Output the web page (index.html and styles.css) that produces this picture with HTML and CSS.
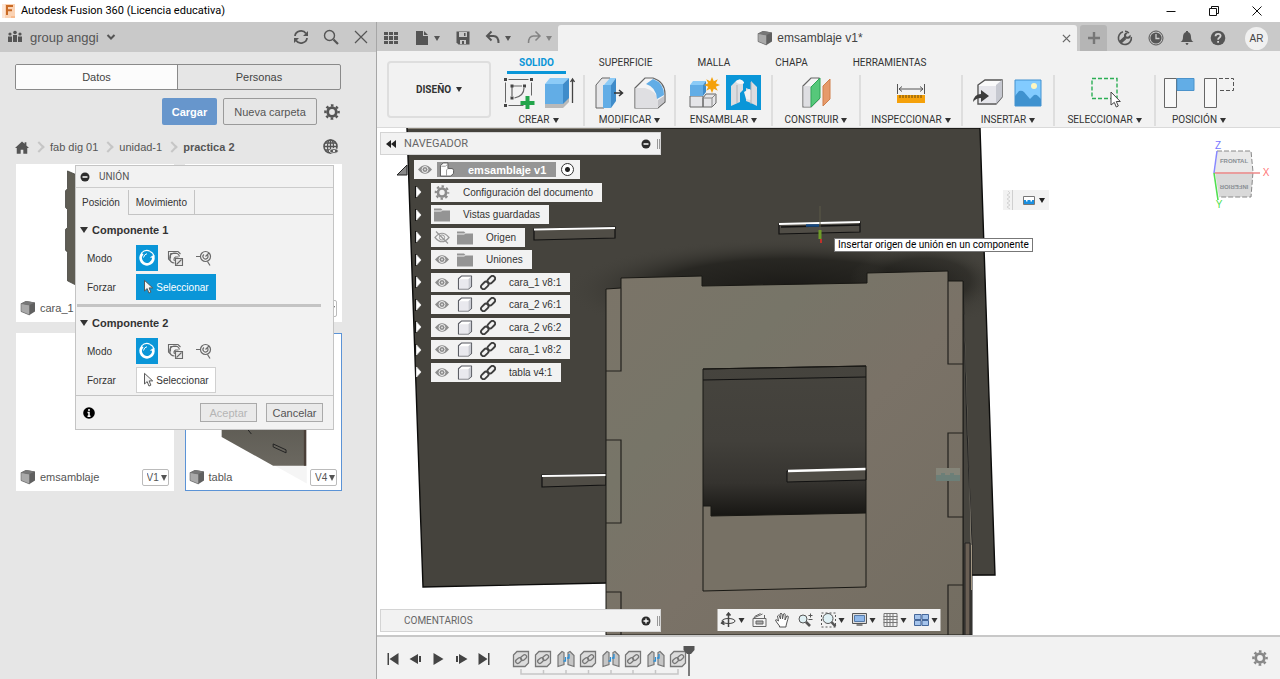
FILE: index.html
```html
<!DOCTYPE html>
<html lang="es">
<head>
<meta charset="utf-8">
<title>Autodesk Fusion 360 (Licencia educativa)</title>
<link rel="stylesheet" href="styles.css">
</head>
<body>
<svg class="defs" aria-hidden="true">
  <defs>
    <linearGradient id="gTabla" x1="0" y1="0" x2="0" y2="1"><stop offset="0" stop-color="#55534c"/><stop offset="1" stop-color="#6b6860"/></linearGradient>
  </defs>
  <symbol id="cube" viewBox="0 0 16 16"><path d="M1 3.500 6 1l9 1.500v9L9.500 15 1 11.500z" fill="#606060"/><path d="M1 3.500 9.500 5v10L1 11.500z" fill="#a9a9a9" stroke="#666" stroke-width=".6"/><path d="M1 3.500 6 1l9 1.500L9.500 5z" fill="#777"/></symbol>
  <symbol id="gear" viewBox="0 0 16 16"><circle cx="8" cy="8" r="4.300" fill="none" stroke="currentColor" stroke-width="2.800"/><circle cx="8" cy="8" r="6.600" fill="none" stroke="currentColor" stroke-width="2.400" stroke-dasharray="2.600 2.584" stroke-dashoffset="1.300"/></symbol>
  <symbol id="eye" viewBox="0 0 16 12"><path d="M1 6Q8-2.500 15 6 8 14.500 1 6z" fill="#8c8c8c"/><circle cx="8" cy="6" r="3" fill="#8c8c8c" stroke="#f2f2f2"/><circle cx="8" cy="6" r="1" fill="#ddd"/></symbol>
  <symbol id="eyeoff" viewBox="0 0 16 12"><path d="M1 6Q8-2.500 15 6 8 14.500 1 6z" fill="none" stroke="#999" stroke-width="1.200"/><circle cx="8" cy="6" r="2.600" fill="none" stroke="#999"/><path d="M2 0l12 12" stroke="#999" stroke-width="1.200"/></symbol>
  <symbol id="folder" viewBox="0 0 16 14"><path d="M0 1h7l2 2h7v11H0z" fill="#949494"/><path d="M0 3.500h7.500L9 2" fill="none" stroke="#f2f2f2"/></symbol>
  <symbol id="body" viewBox="0 0 16 16"><path d="M1 4 4.500 1H15v11l-3.500 3H1z" fill="#fff" stroke="#55575f" stroke-width="1.100" stroke-linejoin="round"/><path d="M11.500 4.500 14.500 1.500V12l-3 3z" fill="#c9cbd2"/><path d="M1.600 4.500h9.900v10H1.600z" fill="#e9e9ee"/></symbol>
  <symbol id="link" viewBox="0 0 16 16"><g fill="none" stroke="#3e3e3e" stroke-width="2"><rect x="7" y="2.300" width="9" height="5.400" rx="2.700" transform="rotate(-45 11.500 4.900)"/><rect x="0" y="8.500" width="9" height="5.400" rx="2.700" transform="rotate(-45 4.500 11.100)"/></g></symbol>
  <symbol id="minus" viewBox="0 0 10 10"><circle cx="5" cy="5" r="4.500" fill="#2c2c2c"/><path d="M2.500 5h5" stroke="#fff" stroke-width="1.500"/></symbol>
  <symbol id="plus" viewBox="0 0 10 10"><circle cx="5" cy="5" r="4.500" fill="#2c2c2c"/><path d="M2.500 5h5M5 2.500v5" stroke="#fff" stroke-width="1.300"/></symbol>
  <symbol id="joint" viewBox="0 0 22 26"><g fill="none" stroke="#fff"><path d="M6.500 8.500A6.300 6.300 0 1 0 16.800 10.500" stroke-width="2.800"/><path d="M5.500 8A7.400 7.400 0 0 1 14 6.200" stroke-width="1.100"/><path d="M14 6.500q3 1 4 4.500l-3.500 1.500" stroke-width="1.100"/><path d="M7.500 12.500q.5-3 3.500-3.800" stroke-width="1"/></g></symbol>
  <symbol id="between" viewBox="0 0 17 17"><g fill="none" stroke="#6a6a6a" stroke-width="1.100"><path d="M3 10.500 1.500 9V1.500H11L13.500 4M3.500 3.500h7M3.500 3.500v5"/><path d="M7.500 13A5 5 0 1 1 12.500 6.500M7.500 11a3 3 0 0 1 1-4l3 0"/><path d="M8.500 8.500h7v7h-7z" fill="#e6e6e6"/><path d="M9.500 14.500l5-5"/></g></symbol>
  <symbol id="axisj" viewBox="0 0 17 17"><g fill="none" stroke="#6a6a6a" stroke-width="1.200"><path d="M1 6.500h4M12.500 11.500l2.500 4"/><circle cx="10.500" cy="6.500" r="5"/><path d="M12.500 5A2.500 2.500 0 1 1 9 4.500M10.500 6.500 14 3"/></g></symbol>
  <symbol id="cursor" viewBox="0 0 12 18"><path d="M1.500 1.500v12l3-2.700 2 5 2.200-1-2-4.800h4z" fill="#f4f4f4" stroke="#555" stroke-width="1.100"/></symbol>
  <symbol id="tlink" viewBox="0 0 18 18"><path d="M1.500 5 5 1.500h11.500V13L13 16.500H1.500z" fill="#dcdcdc" stroke="#777" stroke-width="1.300"/><g fill="none" stroke="#777" stroke-width="1.300"><rect x="3" y="8.500" width="6.500" height="4" rx="2" transform="rotate(-40 6.500 10)"/><rect x="8" y="5.500" width="6.500" height="4" rx="2" transform="rotate(-40 11.500 7)"/></g></symbol>
  <symbol id="tjoint" viewBox="0 0 18 18"><path d="M1 5.500 5 1.500l2 1v12L1 16.500zM17 5.500l-4-4-2 1v12l6 2z" fill="#c6c6c6" stroke="#777" stroke-width="1.200"/><path d="M6.500 11h2V7M12 4v4h-2" fill="none" stroke="#2b8fd6" stroke-width="1.300"/></symbol>
  <symbol id="arr" viewBox="0 0 8 12"><path d="M1.500 0v12" stroke="#111"/><path d="M2.500 1 7 6 2.500 11z" fill="#fff" stroke="#ddd"/></symbol>
</svg>

<header class="titlebar">
  <svg class="logo" viewBox="0 0 16 16"><path d="M1 1h13v14H1z" fill="#fbd3b4"/><path d="M1 1h3v14H1z" fill="#fde6d6"/><path d="M6 12V3h6M6 7.200h5" fill="none" stroke="#c96a25" stroke-width="2"/><path d="M10 14h4" stroke="#f5a468"/></svg>
  <h1>Autodesk Fusion 360 (Licencia educativa)</h1>
  <div class="winbtns">
    <button aria-label="Minimizar"><svg viewBox="0 0 12 12"><path d="M1.500 6.500h9"/></svg></button>
    <button aria-label="Restaurar"><svg viewBox="0 0 12 12"><path d="M1.500 3.500h7v7h-7zM3.500 3V1.500h7v7H9"/></svg></button>
    <button aria-label="Cerrar"><svg viewBox="0 0 12 12"><path d="M1.500 1.500l9 9M10.500 1.500l-9 9"/></svg></button>
  </div>
</header>

<div class="workspace">
<aside class="data">
  <div class="data-head">
    <button class="team"><svg class="i16" viewBox="0 0 16 16" fill="#555"><circle cx="3" cy="5" r="1.600"/><circle cx="8" cy="3.500" r="1.800"/><circle cx="13" cy="5" r="1.600"/><path d="M1 7.500h4V13H1zM6 6h4v7H6zM11 7.500h4V13h-4z"/></svg><span>group anggi</span><svg class="chev" viewBox="0 0 10 8"><path d="M1.500 2 5 5.500 8.500 2" fill="none" stroke="#555" stroke-width="2"/></svg></button>
    <div class="head-tools">
      <button aria-label="Actualizar"><svg class="i16" viewBox="0 0 16 16" fill="none" stroke="#555" stroke-width="1.800"><path d="M2 7A6 5.500 0 0 1 13 4.500M14 9A6 5.500 0 0 1 3 11.500"/><path d="M15 2v5h-5zM1 14V9h5z" fill="#555" stroke="none"/></svg></button>
      <button aria-label="Buscar"><svg class="i16" viewBox="0 0 16 16" fill="none" stroke="#555"><circle cx="6.500" cy="6.500" r="5" stroke-width="1.400"/><path d="M10.500 10.500l4.500 4.500" stroke-width="2.200"/></svg></button>
      <button aria-label="Cerrar panel"><svg class="i16" viewBox="0 0 16 16" stroke="#555" stroke-width="1.200"><path d="M2 2l12 12M14 2 2 14"/></svg></button>
    </div>
  </div>
  <div class="seg"><button class="on">Datos</button><button>Personas</button></div>
  <div class="actions">
    <button class="upload">Cargar</button><button class="newf">Nueva carpeta</button>
    <button class="plain" aria-label="Configuración"><svg class="i16 dark"><use href="#gear"/></svg></button>
  </div>
  <nav class="crumbs">
    <a href="#" aria-label="Inicio"><svg class="home" viewBox="0 0 16 14"><path d="M0 7.500 8 0l3 2.800V1h2v3.700l3 2.800h-2V14H9.500V9.500h-3V14H2V7.500z" fill="#555"/></svg></a>
    <i class="sep"></i><a href="#">fab dig 01</a><i class="sep"></i><a href="#">unidad-1</a><i class="sep"></i><a href="#" class="here">practica 2</a>
    <button class="plain globe" aria-label="Compartir"><svg class="i16" viewBox="0 0 16 16" fill="none" stroke="#555"><circle cx="7.500" cy="7.500" r="6.500" stroke-width="1.600"/><ellipse cx="7.500" cy="7.500" rx="3" ry="6.500" stroke-width="1.300"/><path d="M1 7.500h13M2 4h11M2 11h11M7.500 1v13" stroke-width="1.300"/><path d="M6 12q5-5 10 0-5 5-10 0z" fill="#555" stroke="#e6e6e6"/><circle cx="11" cy="12" r="1.200" fill="#e6e6e6" stroke="none"/></svg></button>
  </nav>
  <div class="cards">
    <article class="card"><svg class="thumb" viewBox="0 0 157 125"><path d="M51 6l14 6v112l-14-7V88l-2-2V65l2-2V45l-2-2V26l2-2z" fill="#5f5d54" stroke="#33322d" stroke-width=".7"/></svg>
      <footer><svg class="i16"><use href="#cube"/></svg><span>cara_1</span></footer></article>
    <article class="card"><div class="thumb"></div>
      <footer><label class="ver"><select aria-label="Versión de cara_2"><option></option></select></label></footer></article>
    <article class="card"><div class="thumb"></div>
      <footer><svg class="i16"><use href="#cube"/></svg><span>emsamblaje</span><label class="ver"><select aria-label="Versión de emsamblaje"><option>V1</option></select></label></footer></article>
    <article class="card sel"><svg class="thumb" viewBox="0 0 157 157"><path d="M88 132h34v19z" fill="#f5f5f5"/><path d="M36 60h85v73H88L36 104z" fill="url(#gTabla)"/><path d="M119 60h2.500v73H119z" fill="#4a3f38"/><path d="M88 111l13 6v3l-13-6zM62 96l4 5" fill="none" stroke="#222"/></svg>
      <footer><svg class="i16"><use href="#cube"/></svg><span>tabla</span><label class="ver"><select aria-label="Versión de tabla"><option>V4</option></select></label></footer></article>
  </div>
</aside>

<main class="main">
  <div class="tabbar">
    <div class="quick">
      <button aria-label="Panel de datos"><svg class="i16" viewBox="0 0 16 16" fill="#555"><path d="M1 2h4v3H1zM6 2h4v3H6zM11 2h4v3h-4zM1 6h4v4H1zM6 6h4v4H6zM11 6h4v4h-4zM1 11h4v3H1zM6 11h4v3H6zM11 11h4v3h-4z"/></svg></button>
      <button aria-label="Archivo"><svg class="i16" viewBox="0 0 16 16" fill="#555"><path d="M2 1h7v5h5v9H2zM10 1l4 4h-4z"/></svg><i class="caret"></i></button>
      <button aria-label="Guardar"><svg class="i16" viewBox="0 0 16 16"><path d="M1.500 1.500h13v13h-11l-2-2z" fill="#555"/><path d="M4 2v5h8V2zM5 10v4h6v-4z" fill="#c9c9c9"/><path d="M9 3h1.500v3H9zM7 11h2v3H7z" fill="#555"/></svg></button>
      <button aria-label="Deshacer"><svg class="i16" viewBox="0 0 16 16"><path d="M2.500 6h6q5 0 5 7M6.500 1.500 2 6l4.500 4.500" fill="none" stroke="#555" stroke-width="2"/></svg><i class="caret"></i></button>
      <button aria-label="Rehacer" class="dim"><svg class="i16" viewBox="0 0 16 16"><path d="M13.500 6h-6q-5 0-5 7M9.500 1.500 14 6l-4.500 4.500" fill="none" stroke="#555" stroke-width="1.500"/></svg><i class="caret"></i></button>
    </div>
    <div class="doctab"><span class="docname"><svg class="i16"><use href="#cube"/></svg>emsamblaje v1*</span><button aria-label="Cerrar documento"><svg viewBox="0 0 10 10"><path d="M1 1l8 8M9 1 1 9" stroke="#666" stroke-width="1.400"/></svg></button></div>
    <button class="add" aria-label="Nuevo"><svg viewBox="0 0 12 12"><path d="M6 0v12M0 6h12" stroke="#777" stroke-width="2.400"/></svg></button>
    <div class="status">
      <button aria-label="Extensiones"><svg class="i16" viewBox="0 0 16 16"><path d="M6 1.800A6.500 6.500 0 1 0 14.300 7" fill="none" stroke="#555" stroke-width="1.600"/><path d="M8 1.300A6.500 6.500 0 0 1 12 3" fill="none" stroke="#555" stroke-width="1.400"/><path d="M3 12.500 8 8" stroke="#555" stroke-width="3.400"/><path d="M7 4.500v4.300h4.500q3-1 2-4L11 6.800 9.300 6.500 9 5l2-2.300Q8 2 7 4.500z" fill="#555"/></svg></button>
      <button aria-label="Historial"><svg class="i16" viewBox="0 0 16 16"><circle cx="8" cy="8" r="7" fill="none" stroke="#555"/><circle cx="8" cy="8" r="5.600" fill="#555"/><path d="M8 4v4.500h3.500" fill="none" stroke="#ccc" stroke-width="1.300"/></svg></button>
      <button aria-label="Avisos"><svg class="i16" viewBox="0 0 16 16" fill="#555"><path d="M7 1h2v1q3 1 3 5 0 4 2.500 5h-13Q4 11 4 7q0-4 3-5zM6.500 13h3q-.500 2-1.500 2t-1.500-2z"/></svg></button>
      <button aria-label="Ayuda"><svg class="i16" viewBox="0 0 16 16"><circle cx="8" cy="8" r="7.300" fill="#555"/><path d="M5.500 6.300q0-2.500 2.600-2.500 2.500 0 2.500 2 0 1-1.300 1.900-1.200.8-1.200 2M8.100 11v1.800" fill="none" stroke="#d4d4d4" stroke-width="1.800"/></svg></button>
      <button class="avatar">AR</button>
    </div>
  </div>

  <div class="ribbon">
    <button class="mode">DISEÑO <i class="caret"></i></button>
    <div class="tools">
      <nav class="tabs"><a href="#" class="on">SOLIDO</a><a href="#">SUPERFICIE</a><a href="#">MALLA</a><a href="#">CHAPA</a><a href="#">HERRAMIENTAS</a></nav>
      <div class="groups">
        <section><div class="icons">
          <button aria-label="Crear boceto"><svg viewBox="0 0 32 32"><path d="M5.500 2.500h20M2.500 5.500v20M28.500 5.500v13M5.500 28.500h15" fill="none" stroke="#666"/><path d="M9 19V9h10M21 11q0 8-9.500 10" fill="none" stroke="#666" stroke-width="1.200"/><path d="M1 1h3v3H1zM27 1h3v3h-3zM1 27h3v3H1zM7.500 7.500h3v3h-3zM20 7.500h3v3h-3zM7.500 19.500h3v3h-3z" fill="#444"/><path d="M22.500 19h4v5h5v4h-5v4h-4v-4h-5v-4h5z" fill="#23a54b"/></svg></button>
          <button aria-label="Extruir"><svg viewBox="0 0 32 32"><path d="M2 25h18l6-5v5l-6 6H2z" fill="#b9b9b9"/><path d="M2 7 7 1h19l-6 6z" fill="#8ccbf7"/><path d="M2 7h18v20H2z" fill="#62ade6"/><path d="M20 7l6-6v20l-6 6z" fill="#3f8cca"/><path d="M29.500 26V3M27.500 5l2-3 2 3" fill="none" stroke="#444" stroke-width="1.300"/></svg></button></div>
          <button class="gl">CREAR<i class="caret"></i></button></section>
        <section><div class="icons">
          <button aria-label="Pulsar/tirar"><svg viewBox="0 0 32 32"><path d="M2 8l6-7h8v23l-6 7H2z" fill="#e6e6e8" stroke="#666"/><path d="M10 8l6-7h6l-5 7z" fill="#8ccbf7"/><path d="M9 8h8v23H9z" fill="#62ade6"/><path d="M17 8l5-7v23l-5 7z" fill="#3f8cca"/><path d="M20 16h8M25 13l3.500 3-3.500 3" fill="none" stroke="#333" stroke-width="1.500"/></svg></button>
          <button aria-label="Empalme"><svg viewBox="0 0 32 32"><path d="M1 11 11 1h8q12 4 12 16v8l-7 6H1z" fill="#f4f4f5" stroke="#666" stroke-width="1.200"/><path d="M1.500 11H11q12 3 13 13v7H1.500z" fill="#dfdfe2"/><path d="M12 7l7-5q11 4 11 16l-7 4Q22 10 12 7z" fill="#62ade6"/><path d="M24 23l6-4v6l-6 5z" fill="#c4c4c8"/></svg></button></div>
          <button class="gl">MODIFICAR<i class="caret"></i></button></section>
        <section><div class="icons">
          <button aria-label="Nuevo componente"><svg viewBox="0 0 32 32"><path d="M2 19h13v11H2zM15 21l3-4h10v9l-4 4h-9z" fill="#e5e5e8" stroke="#666"/><path d="M15 21h9v9M24 21l4-4" fill="none" stroke="#888"/><path d="M2 8l3-4h13l-3 4z" fill="#8ccbf7"/><path d="M2 8h13v11H2z" fill="#62ade6"/><path d="M15 8l3-4v11l-3 4z" fill="#3f8cca"/><path d="M24 0l1.800 4.200 4-2-2 4.100L32 8l-4.200 1.700 2 4.100-4-2L24 16l-1.800-4.200-4 2 2-4.100L16 8l4.200-1.700-2-4.100 4 2z" fill="#f5a10a"/></svg></button>
          <button class="active" aria-label="Unión"><svg viewBox="0 0 32 32"><path d="M3 9l5-5q4-3 7 0v9l-3 3v9l-9 4z" fill="#dcdcdf"/><path d="M8 4q4-3 7 0t-2 3-5-3z" fill="#f6f6f7"/><path d="M9 8v18" stroke="#b0b0b5" fill="none"/><path d="M29 10l-6-6v9l-5-2v13l5 2 6 3z" fill="#dcdcdf"/><path d="M16 15l5-3 2 1v10l-5-1z" fill="#f2f2f4"/><path d="M23 5v22" stroke="#b0b0b5" fill="none"/></svg></button></div>
          <button class="gl">ENSAMBLAR<i class="caret"></i></button></section>
        <section><div class="icons">
          <button aria-label="Plano de desfase"><svg viewBox="0 0 32 32"><path d="M3 9l8-8h8v21l-8 8H3z" fill="#f4f4f4" stroke="#666" stroke-width="1.200"/><path d="M3.500 9H11v20.500H3.500z" fill="#dedee2"/><path d="M11 10l9-9v20l-9 9z" fill="#56c87a" stroke="#2fa557"/><path d="M23 9l7-7v20l-7 7z" fill="#e69a6a" stroke="#cf7f4b"/></svg></button></div>
          <button class="gl">CONSTRUIR<i class="caret"></i></button></section>
        <section><div class="icons">
          <button aria-label="Medir"><svg viewBox="0 0 32 32"><path d="M2.500 7v10M29.500 7v10M4 12h24M7 9.500 4 12l3 2.500M25 9.500l3 2.500-3 2.500" fill="none" stroke="#555"/><path d="M2 18h28v8H2z" fill="#f5a10a"/><path d="M5 18v3M8 18v3M11 18v3M14 18v3M17 18v3M20 18v3M23 18v3M26 18v3" stroke="#6b4a0a"/></svg></button></div>
          <button class="gl">INSPECCIONAR<i class="caret"></i></button></section>
        <section><div class="icons">
          <button aria-label="Insertar derivado"><svg viewBox="0 0 32 32"><path d="M6 8l7-5h17v17l-6 7H6z" fill="#fafafa" stroke="#555" stroke-width="1.400"/><path d="M24 8l6-5v17l-6 7z" fill="#c6c8d0"/><path d="M7 9h17v17H7z" fill="#e6e6eb"/><path d="M1 25q1-8 8-8v-4l8 6-8 6v-4q-5 0-8 4z" fill="#3c3c3c"/></svg></button>
          <button aria-label="Lienzo"><svg viewBox="0 0 32 32"><path d="M3 3h26v26H3z" fill="#82cbff"/><path d="M3 19l4-5q3-1 5 1l6 7 4-4q2-1 4 1l3 3v7H3z" fill="#3f92cf"/><circle cx="22" cy="9" r="3" fill="#fdf6c0"/><path d="M3 3h26v26H3z" fill="none" stroke="#4292d0"/></svg></button></div>
          <button class="gl">INSERTAR<i class="caret"></i></button></section>
        <section><div class="icons">
          <button aria-label="Seleccionar"><svg viewBox="0 0 32 32"><path d="M3 1.500h25v20H3z" fill="none" stroke="#2cae55" stroke-width="1.400" stroke-dasharray="4 2"/><path d="M22 15v13l3.300-2.600 2 4.600 2-1-2-4.500h4z" fill="#fff" stroke="#444"/></svg></button></div>
          <button class="gl">SELECCIONAR<i class="caret"></i></button></section>
        <section><div class="icons">
          <button aria-label="Capturar posición"><svg viewBox="0 0 32 32"><path d="M1.500 1.500h12v29h-12z" fill="#f8f8f8" stroke="#666"/><path d="M14 1.500h17v12H14z" fill="#62ade6" stroke="#4b93cb"/></svg></button>
          <button aria-label="Revertir posición"><svg viewBox="0 0 32 32"><path d="M1.500 1.500h12v29h-12z" fill="#f8f8f8" stroke="#666"/><path d="M16 1.500h14.500v12H15" fill="none" stroke="#555" stroke-dasharray="4 2"/></svg></button></div>
          <button class="gl">POSICIÓN<i class="caret"></i></button></section>
      </div>
    </div>
  </div>

  <div class="canvas">
    <svg class="scene" viewBox="377 128 903 507" preserveAspectRatio="xMinYMin meet">
      <defs>
        <radialGradient id="dk"><stop offset="0" stop-color="#1a1916"/><stop offset=".6" stop-color="#23221e" stop-opacity=".85"/><stop offset="1" stop-color="#45433d" stop-opacity="0"/></radialGradient>
        <linearGradient id="hole" x1="0" y1="0" x2="0" y2="1"><stop offset="0" stop-color="#46443e"/><stop offset=".5" stop-color="#42403b"/><stop offset=".78" stop-color="#35332f"/><stop offset="1" stop-color="#171613"/></linearGradient>
        <linearGradient id="face" x1="0" y1="0" x2="1" y2="1"><stop offset="0" stop-color="#7b7468"/><stop offset=".3" stop-color="#777568"/><stop offset=".55" stop-color="#7a7267"/><stop offset="1" stop-color="#736d61"/></linearGradient>
        <clipPath id="tc"><path d="M407 128H980L995 575 423 587z"/></clipPath>
      </defs>
      <path d="M407 128H980L995 575 423 587z" fill="#45433d"/>
      <g clip-path="url(#tc)"><ellipse cx="790" cy="290" rx="225" ry="52" fill="url(#dk)"/><ellipse cx="925" cy="280" rx="75" ry="36" fill="url(#dk)" opacity=".6"/></g>
      <path d="M407 128.500H620" stroke="#8a857a"/><path d="M620 128.500H980" stroke="#1d1c19"/>
      <path d="M407 128 423 587 606 583M980 128 995 575 971 575" fill="none" stroke="#0c0c0b" stroke-width="1.400"/>
      <g stroke="#111" stroke-width="1.200"><path d="M534 229l81-2v11l-81 2z" fill="#504d46"/><path d="M779 224l81-2v10l-81 2z" fill="#504d46"/><path d="M542 475l64-1v11l-64 2z" fill="#504d46"/></g>
      <path d="M534 229.500l81-1.500M779 224l81-2M542 476l64-1" stroke="#fff" stroke-width="2"/>
      <path d="M781 227l79-2" stroke="#111" stroke-width="1.500"/>
      <path d="M963 281 967 430 972 545V635H963z" fill="#46443e" stroke="#222"/>
      <path d="M963.500 300 965 340 971.500 545V575L969 470z" fill="#a9a190"/><path d="M965 543h5v92h-5z" fill="#6a5f54" stroke="#222"/><path d="M971.500 545v45" stroke="#a39783"/>
      <path d="M606 635V289l15-1V278l81-2v10l165-3V273l81-2v10h15V635z" fill="url(#face)" stroke="#191814"/>
      <path d="M606 371h15V288M606 440h15v83h-15M606 592h15v43M963 364h-15V281M963 433h-15v84h15M963 585h-15v50" fill="none" stroke="#22211d" stroke-width="1.200"/>
      <path d="M703 369l163-3v221l-163 4z" fill="#777165"/>
      <path d="M703 369l163-3v147l-155 3v-10h-8z" fill="url(#hole)"/>
      <path d="M703 369l163-3M703 380l163-3" stroke="#111"/>
      <path d="M787 471l79-2v11l-79 2z" fill="#504d46" stroke="#111"/><path d="M788 471l78-2" stroke="#fff" stroke-width="2.400"/>
      <path d="M703 506h8v10l155-3M703 369l163-3v221l-163 4z" fill="none" stroke="#191814"/>
      <path d="M806 225.500h13" stroke="#174a83" stroke-width="2.500"/><path d="M820 206v24" stroke="#5c5a48"/><path d="M820 230v9" stroke="#6f9c27" stroke-width="3"/><path d="M821 239v4" stroke="#c0302a" stroke-width="2"/>
      <path d="M936 468h24v13h-24z" fill="#858579"/><path d="M936 475h5v-2h4v2h5v-2h4v2h6v6h-24z" fill="#6c7f78"/>
    </svg>

    <div class="bar nav"><svg class="rew" viewBox="0 0 10 8"><path d="M5 0v8L0 4zM10 0v8L5 4z" fill="#222"/></svg><h2>NAVEGADOR</h2><button aria-label="Contraer"><svg><use href="#minus"/></svg></button><i class="grip"></i></div>
    <ul class="tree">
      <li class="root"><svg class="rootarr" viewBox="0 0 12 12"><path d="M1 11 11 1v10z" fill="#888" stroke="#222"/></svg><div class="row"><svg class="ti"><use href="#eye"/></svg><span class="act"><svg class="ti" viewBox="0 0 16 16"><path d="M1 4l3-3h5v6h5l1 2v3l-3 3H1z" fill="#fff" stroke="#555"/><path d="M7.500 15V8.500L9 7M2 4.500h4.500L9 2" fill="none" stroke="#999"/></svg><b>emsamblaje v1</b></span><input type="radio" checked aria-label="Activar emsamblaje v1"></div></li>
      <li><svg class="arr"><use href="#arr"/></svg><div class="row"><svg class="ti gray"><use href="#gear"/></svg><span>Configuración del documento</span></div></li>
      <li><svg class="arr"><use href="#arr"/></svg><div class="row"><svg class="ti"><use href="#folder"/></svg><span>Vistas guardadas</span></div></li>
      <li><svg class="arr"><use href="#arr"/></svg><div class="row"><svg class="ti"><use href="#eyeoff"/></svg><svg class="ti"><use href="#folder"/></svg><span>Origen</span></div></li>
      <li><svg class="arr"><use href="#arr"/></svg><div class="row"><svg class="ti"><use href="#eye"/></svg><svg class="ti"><use href="#folder"/></svg><span>Uniones</span></div></li>
      <li><svg class="arr"><use href="#arr"/></svg><div class="row"><svg class="ti"><use href="#eye"/></svg><svg class="ti"><use href="#body"/></svg><svg class="ti"><use href="#link"/></svg><span>cara_1 v8:1</span></div></li>
      <li><svg class="arr"><use href="#arr"/></svg><div class="row"><svg class="ti"><use href="#eye"/></svg><svg class="ti"><use href="#body"/></svg><svg class="ti"><use href="#link"/></svg><span>cara_2 v6:1</span></div></li>
      <li><svg class="arr"><use href="#arr"/></svg><div class="row"><svg class="ti"><use href="#eye"/></svg><svg class="ti"><use href="#body"/></svg><svg class="ti"><use href="#link"/></svg><span>cara_2 v6:2</span></div></li>
      <li><svg class="arr"><use href="#arr"/></svg><div class="row"><svg class="ti"><use href="#eye"/></svg><svg class="ti"><use href="#body"/></svg><svg class="ti"><use href="#link"/></svg><span>cara_1 v8:2</span></div></li>
      <li><svg class="arr"><use href="#arr"/></svg><div class="row"><svg class="ti"><use href="#eye"/></svg><svg class="ti"><use href="#body"/></svg><svg class="ti"><use href="#link"/></svg><span>tabla v4:1</span></div></li>
    </ul>

    <div class="tip" role="tooltip">Insertar origen de unión en un componente</div>
    <div class="mini"><svg class="zig" viewBox="0 0 10 20"><path d="M5 1l2 2-3 2 3 2-3 2 3 2-3 2 3 2-3 2 3 2" fill="none" stroke="#d4d4d4"/><path d="M9.500 0v20" stroke="#d0d0d0"/></svg><button aria-label="Filtro de unión"><svg class="wave" viewBox="0 0 12 9"><path d="M.5.5h11v8H.5z" fill="#fff" stroke="#777"/><path d="M1 4h2v1.500h1.500V4h3v1.500H9V4h2v4H1z" fill="#1a8fe0"/></svg><i class="caret"></i></button></div>
    <svg class="vcube" viewBox="1208 138 66 72"><path d="M1217 151h34l2 21h-38z" fill="#e9e9e9"/><path d="M1215 172h38l-2 25h-32z" fill="#d9d9d9"/><path d="M1217 151h34l2 21-2 25h-32" fill="none" stroke="#888" stroke-dasharray="5 2"/><path d="M1214 173h46" stroke="#e88" stroke-width="1.300"/><path d="M1214 173l3-22" stroke="#88f" stroke-width="1.500"/><path d="M1214 173l4 27" stroke="#4fe04f" stroke-width="1.600"/><text x="1234" y="163" class="ct">FRONTAL</text><text x="1234" y="163" class="ct" transform="rotate(180 1234 174)">INFERIOR</text><text x="1218" y="149" class="ax z">Z</text><text x="1266" y="176" class="ax x">X</text><text x="1219" y="208" class="ax y">Y</text></svg>

    <div class="bar com"><h2>COMENTARIOS</h2><button aria-label="Expandir"><svg><use href="#plus"/></svg></button><i class="grip"></i></div>
    <div class="viewbar">
      <button aria-label="Órbita"><svg viewBox="0 0 16 16" fill="none" stroke="#444"><ellipse cx="8" cy="9" rx="6.500" ry="2.500"/><path d="M8 15V1M6 3.500 8 1l2 2.500M3.500 9l-2.500 2 3 1.500" stroke-width="1.500"/></svg><i class="caret"></i></button>
      <button aria-label="Mirar a"><svg viewBox="0 0 16 16" fill="none" stroke="#666"><path d="M1.500 6.500h13v8h-13zM2 6l9-4M3 4.500 9 1.500M13 6V3"/><path d="M4.500 9h7v3h-7z" fill="#aaa"/></svg></button>
      <button aria-label="Encuadre"><svg viewBox="0 0 16 16"><path d="M5 14Q1 9 1 8q1-1 3 1L3 4q1-1.500 2 0l1 3-.5-5q1-1.500 2 0L8 7l1-5q1.500-1 1.700.5L10.500 8l1.800-4q1.500-.5 1.500 1-.3 2-1.300 5l-1 4v1H5z" fill="#fff" stroke="#555"/></svg></button>
      <button aria-label="Zoom"><svg viewBox="0 0 16 16" fill="none" stroke="#555"><circle cx="5.500" cy="7" r="4" fill="#dff0f4"/><path d="M8.500 10l4 4" stroke-width="2.600"/><path d="M11 3.500h4M13 1.500v4M11 7.500h4"/></svg></button>
      <button aria-label="Ajustar"><svg viewBox="0 0 16 16" fill="none" stroke="#555"><path d="M1 1h14v14H1z" stroke-dasharray="2 2"/><circle cx="7.500" cy="6.500" r="5" fill="#dff0f4"/><path d="M11 10l4 4.500" stroke-width="2.600"/></svg><i class="caret"></i></button>
      <button aria-label="Visualización"><svg viewBox="0 0 16 16"><path d="M1 1.500h14v10H1z" fill="#ddd" stroke="#555"/><path d="M3 3.500h10v6H3z" fill="#8fb8ea" stroke="#557aa8"/><path d="M5 14h6v-2H5z" fill="#888"/></svg><i class="caret"></i></button>
      <button aria-label="Rejilla"><svg viewBox="0 0 16 16"><path d="M1.500 1.500h13v13h-13zM4.500 1v14M7.500 1v14M10.500 1v14M1 4.500h14M1 7.500h14M1 10.500h14" fill="none" stroke="#777"/></svg><i class="caret"></i></button>
      <button aria-label="Ventanas"><svg viewBox="0 0 16 16"><path d="M1 2.500h6.500v5H1zM8.500 2.500H15v5H8.500zM1 8.500h6.500v5H1zM8.500 8.500H15v5H8.500z" fill="#a5c4ec" stroke="#45679a"/></svg><i class="caret"></i></button>
    </div>
  </div>

  <footer class="timeline">
    <div class="play">
      <button aria-label="Inicio"><svg viewBox="0 0 12 14"><path d="M1 1h1.500v12H1zM12 1v12L3 7z"/></svg></button>
      <button aria-label="Anterior"><svg viewBox="0 0 12 14"><path d="M8.500 2v10L0 7zM9.500 4h2v6h-2z"/></svg></button>
      <button aria-label="Reproducir"><svg viewBox="0 0 12 14"><path d="M1 1v12l10-6z"/></svg></button>
      <button aria-label="Siguiente"><svg viewBox="0 0 12 14"><path d="M3.500 2v10L12 7zM.5 4h2v6h-2z"/></svg></button>
      <button aria-label="Final"><svg viewBox="0 0 12 14"><path d="M9.500 1H11v12H9.500zM0 1v12l9-6z"/></svg></button>
    </div>
    <div class="track">
      <div class="feats">
        <button aria-label="cara_1"><svg><use href="#tlink"/></svg></button><button aria-label="cara_2"><svg><use href="#tlink"/></svg></button><button aria-label="Unión 1"><svg><use href="#tjoint"/></svg></button><button aria-label="cara_2 copia"><svg><use href="#tlink"/></svg></button><button aria-label="Unión 2"><svg><use href="#tjoint"/></svg></button><button aria-label="cara_1 copia"><svg><use href="#tlink"/></svg></button><button aria-label="Unión 3"><svg><use href="#tjoint"/></svg></button><button aria-label="tabla"><svg><use href="#tlink"/></svg></button>
      </div>
      <svg class="ticks" viewBox="0 0 175 6"><path d="M9 0v5h157V0M31.500 1v4M54 1v4M76.500 1v4M99 1v4M121 1v4M143.500 1v4" fill="none" stroke="#c6c6c6" stroke-width="1.500"/></svg>
      <svg class="marker" viewBox="0 0 12 30"><path d="M.5 0h11v4L8 8H4L.500 4z" fill="#555"/><path d="M6 6v24" stroke="#555" stroke-width="1.500"/></svg>
    </div>
    <button class="plain tgear" aria-label="Opciones"><svg class="i16"><use href="#gear"/></svg></button>
  </footer>
</main>
</div>

<section class="dialog" role="dialog" aria-labelledby="dt">
  <header><svg><use href="#minus"/></svg><h2 id="dt">UNIÓN</h2></header>
  <div class="dtabs"><button class="on">Posición</button><button>Movimiento</button></div>
  <div class="comp">
    <h3><i class="caret"></i>Componente 1</h3>
    <div class="f"><span>Modo</span><button class="m on" aria-label="Simple"><svg class="big"><use href="#joint"/></svg></button><button class="m" aria-label="Entre dos caras"><svg><use href="#between"/></svg></button><button class="m" aria-label="Dos aristas"><svg><use href="#axisj"/></svg></button></div>
    <div class="f"><span>Forzar</span><button class="pick on"><svg><use href="#cursor"/></svg>Seleccionar</button></div>
  </div>
  <hr>
  <div class="comp">
    <h3><i class="caret"></i>Componente 2</h3>
    <div class="f"><span>Modo</span><button class="m on" aria-label="Simple"><svg class="big"><use href="#joint"/></svg></button><button class="m" aria-label="Entre dos caras"><svg><use href="#between"/></svg></button><button class="m" aria-label="Dos aristas"><svg><use href="#axisj"/></svg></button></div>
    <div class="f"><span>Forzar</span><button class="pick"><svg><use href="#cursor"/></svg>Seleccionar</button></div>
  </div>
  <footer><svg viewBox="0 0 12 12"><circle cx="6" cy="6" r="5.800"/><path d="M6 2v2M4.500 5.500H6V9M4.500 9.300h3" stroke="#fff" stroke-width="1.500" fill="none"/></svg><button disabled>Aceptar</button><button>Cancelar</button></footer>
</section>
</body>
</html>
```
FILE: styles.css
```css
* { box-sizing: border-box; }
body { margin: 0; height: 100vh; display: flex; flex-direction: column; position: relative; overflow: hidden; background: #fff; color: #444; font: 12px "Liberation Sans", Arial, sans-serif; }
button, select { font: inherit; color: inherit; border: 0; background: none; padding: 0; margin: 0; display: flex; align-items: center; justify-content: center; }
h1, h2, h3, ul { margin: 0; padding: 0; font: inherit; list-style: none; }
a { color: inherit; text-decoration: none; }
svg { display: block; flex: none; }
.defs { position: absolute; width: 0; height: 0; }
.i16 { width: 16px; height: 16px; }
.caret { display: inline-block; border: 3px solid transparent; border-top: 5px solid currentColor; border-bottom: 0; flex: none; }

.titlebar { height: 22px; display: flex; align-items: center; padding-left: 1px; flex: none; }
.titlebar h1 { font: 11px/22px Roboto, "Noto Sans", sans-serif; color: #000; margin-left: 4px; flex: 1; }
.logo { width: 16px; height: 16px; }
.winbtns { display: flex; gap: 31px; padding-right: 17px; }
.winbtns svg { width: 12px; height: 12px; fill: none; stroke: #111; }

.workspace { flex: 1; min-height: 0; display: grid; grid-template-columns: 376px minmax(0, 1fr); }
.data { background: #e6e6e6; display: flex; flex-direction: column; min-height: 0; font-size: 11px; }
.data-head { height: 30px; background: #c9c9c9; display: flex; align-items: center; justify-content: space-between; padding: 0 7px; flex: none; }
.team { gap: 7px; font-size: 13px; color: #555; }
.chev { width: 10px; height: 8px; }
.head-tools { display: flex; gap: 14px; }
.seg { margin: 12px 35px 0 15px; height: 26px; display: grid; grid-template-columns: 1fr 1fr; border: 1px solid #8a8a8a; border-radius: 2px; overflow: hidden; flex: none; }
.seg .on { background: #fcfcfc; border-right: 1px solid #8a8a8a; }
.actions { display: flex; justify-content: flex-end; align-items: center; gap: 6px; padding: 8px 36px 0 0; }
.actions .upload { width: 55px; height: 27px; background: #6796cc; color: #fff; font-weight: bold; border-radius: 2px; }
.actions .newf { width: 94px; height: 27px; border: 1px solid #9a9a9a; border-radius: 2px; color: #555; }
.actions .plain { margin-left: 1px; }
.dark { color: #555; }
.crumbs { display: flex; align-items: center; gap: 6px; height: 16px; margin: 14px 37px 0 15px; color: #555; }
.home { width: 14px; height: 13px; }
.crumbs .here { font-weight: bold; }
.sep { width: 8px; height: 8px; border: solid #c6c6c6; border-width: 2px 2px 0 0; transform: rotate(45deg); margin-right: 1px; }
.globe { margin-left: auto; }
.cards { margin: 9px 34px 0 16px; display: grid; grid-template-columns: 1fr 1fr; gap: 11px; }
.card { background: #fff; height: 158px; display: flex; flex-direction: column; justify-content: flex-end; position: relative; border: 1px solid #fff; }
.card.sel { border-color: #5b93d6; }
.thumb { position: absolute; inset: 0; width: 100%; }
.card footer { display: flex; align-items: center; gap: 4px; height: 26px; padding: 0 4px 0 3px; position: relative; color: #555; }
.ver { margin-left: auto; position: relative; width: 27px; height: 17px; border: 1px solid #bbb; border-radius: 2px; background: #fff; }
.ver select { appearance: none; width: 100%; height: 15px; font-size: 10px; padding-left: 4px; }
.ver::after { content: ""; position: absolute; right: 1px; top: 5px; border: 3px solid transparent; border-top: 6px solid #555; border-bottom: 0; pointer-events: none; }

.main { display: flex; flex-direction: column; min-width: 0; min-height: 0; border-left: 1px solid #a6a6a6; background: #f2f2f2; }
.tabbar { height: 29px; background: #c9c9c9; display: flex; flex: none; padding-top: 3px; }
.quick { width: 181px; flex: none; display: flex; align-items: center; padding: 0 6px; justify-content: space-between; color: #555; }
.quick button { gap: 4px; }
.dim { opacity: .6; }
.doctab { flex: 1; background: #f2f2f2; border-radius: 3px 3px 0 0; display: flex; align-items: center; padding-right: 6px; }
.docname { flex: 1; display: flex; gap: 4px; justify-content: center; align-items: center; }
.doctab svg[viewBox] { width: 9px; height: 9px; }
.add { width: 27px; margin: 0 3px; background: #b5b5b5; border-radius: 3px 3px 0 0; }
.add svg { width: 12px; height: 12px; }
.status { display: flex; align-items: center; gap: 15px; padding: 0 12px 0 7px; }
.avatar { width: 23px; height: 23px; border-radius: 50%; background: #f0f0f0; font-size: 10px; margin-left: 4px; }

.ribbon { height: 77px; display: flex; flex: none; border-bottom: 1px solid #dadada; font: 10px Roboto, "Liberation Sans", sans-serif; color: #333; }
.mode { width: 104px; margin: 10px 3px 9px 10px; border: 2px solid #dedede; border-radius: 4px; font-weight: bold; gap: 5px; flex: none; }
.tools { flex: 1; min-width: 0; }
.tabs { display: flex; gap: 45px; padding-left: 25px; height: 23px; }
.tabs a { line-height: 23px; position: relative; }
.tabs .on { color: #0a96d8; font-weight: bold; }
.tabs .on::after { content: ""; position: absolute; left: -12px; right: -12px; bottom: 0; height: 3px; background: #0a96d8; }
.groups { display: grid; grid-template-columns: 91px 91px 97px 88px 102px 92px 101px 86px; height: 51px; margin-top: 1px; }
.groups section { border-right: 2px solid #dedede; display: flex; flex-direction: column; align-items: center; justify-content: space-between; }
.groups section:last-child { border: 0; }
.icons { display: flex; gap: 5px; height: 35px; }
.icons button { width: 35px; height: 35px; }
.icons svg { width: 32px; height: 32px; }
.icons .active { background: #0a96d8; }
.gl { gap: 3px; line-height: 12px; }

.canvas { flex: 1; position: relative; min-height: 0; background: #fff; overflow: hidden; }
.scene { width: 100%; height: 100%; }
.bar { position: absolute; left: 3px; width: 281px; height: 23px; background: #f2f2f2; border: 1px solid #d4d4d4; display: flex; align-items: center; padding-left: 5px; color: #666; font: 11px Roboto, sans-serif; }
.bar h2 { flex: 1; padding-left: 8px; }
.bar button svg { width: 10px; height: 10px; }
.bar.nav { top: 4px; }
.bar.com { bottom: 3px; font-size: 10px; }
.bar.com h2 { padding-left: 18px; }
.rew { width: 10px; height: 8px; }
.grip { width: 3px; height: 10px; border: solid #999; border-width: 0 1px; margin-left: 6px; }
.tree { position: absolute; left: 37px; top: 32px; height: 222px; display: flex; flex-direction: column; justify-content: space-between; align-items: flex-start; font-size: 10px; color: #333; }
.tree li { display: flex; align-items: center; gap: 9px; }
.root { margin-left: -18px; font-size: 11px; }
.root.root { gap: 6px; }
.rootarr { width: 12px; height: 12px; }
.arr { width: 8px; height: 12px; }
.row { height: 19px; background: #f2f2f2; display: flex; align-items: center; gap: 8px; padding: 0 9px 0 3px; }
.row > span { padding-left: 6px; }
.ti { width: 16px; height: 15px; margin-right: -1px; }
.gray { color: #8c8c8c; }
.root .row { padding-right: 6px; gap: 5px; }
.row .act { background: #959595; color: #fff; height: 15px; display: flex; align-items: center; padding: 0 10px 0 2px; gap: 14px; }
.row input { appearance: none; width: 13px; height: 13px; margin: 0; border: 1px solid #333; border-radius: 50%; background: radial-gradient(circle, #222 0 2px, #fff 3px); }
.tip { position: absolute; left: 457px; top: 110px; height: 14px; padding: 0 3px; border: 1px solid #777; background: #fff; color: #000; font: 10px/12px Roboto, "Noto Sans", sans-serif; white-space: nowrap; }
.mini { position: absolute; right: 231px; top: 62px; width: 46px; height: 20px; background: #f2f2f2; display: flex; align-items: center; gap: 10px; }
.zig { width: 10px; height: 20px; }
.wave { width: 12px; height: 9px; }
.mini button { gap: 4px; color: #222; }
.vcube { position: absolute; right: 6px; top: 10px; width: 66px; height: 72px; }
.ct { font: bold 6px "Liberation Sans", sans-serif; fill: #8a8f94; text-anchor: middle; }
.ax { font: 10px "Liberation Sans", sans-serif; text-anchor: middle; }
.z { fill: #77f; } .x { fill: #f77; } .y { fill: #4fe04f; }
.viewbar { position: absolute; left: 50%; transform: translateX(-50%); bottom: 4px; width: 223px; height: 22px; background: #f2f2f2; display: flex; align-items: center; justify-content: space-between; padding: 0 3px; color: #333; }
.viewbar svg { width: 16px; height: 16px; }
.viewbar button { gap: 2px; }

.timeline { height: 44px; border-top: 2px solid #c8c8c8; display: flex; flex: none; padding-left: 9px; }
.play { display: flex; gap: 10px; align-items: center; height: 44px; }
.play svg { width: 13px; height: 14px; fill: #444; }
.track { position: relative; margin-left: 21px; padding-top: 13px; width: 175px; }
.feats { display: flex; justify-content: space-between; }
.feats svg { width: 18px; height: 18px; }
.ticks { width: 175px; height: 6px; margin-top: 1px; }
.marker { position: absolute; right: -8px; top: 9px; width: 12px; height: 30px; }
.tgear { margin-left: auto; padding-right: 12px; color: #888; }

.dialog { position: absolute; left: 75px; top: 165px; width: 259px; background: #f2f2f2; border: 1px solid #c4c4c4; color: #333; font-size: 10px; }
.dialog header { display: flex; align-items: center; gap: 9px; height: 22px; padding-left: 4px; border-bottom: 1px solid #ccc; font-family: Roboto, sans-serif; color: #555; }
.dialog header svg { width: 10px; height: 10px; }
.dtabs { display: flex; height: 27px; padding-top: 2px; border-bottom: 1px solid #c4c4c4; }
.dtabs button { padding: 0 7px; border-right: 1px solid #c4c4c4; }
.dtabs .on { background: #f2f2f2; margin-bottom: -1px; padding: 0 8px 0 6px; }
.comp { padding: 6px 0 0 4px; }
.comp h3 { font: bold 11px/18px "Liberation Sans", sans-serif; height: 18px; display: flex; align-items: center; gap: 4px; }
.comp h3 .caret { border-width: 6px 4px 0; }
.f { display: flex; align-items: center; height: 26px; margin-top: 6px; padding-left: 7px; }
.f + .f { margin-top: 3px; }
.f span { width: 49px; }
.m { width: 22px; height: 26px; margin-right: 6px; }
.m svg { width: 17px; height: 17px; }
.m .big { width: 22px; height: 26px; }
.m.on, .pick.on { background: #0a96d8; color: #fff; border-color: #0a96d8; }
.pick { width: 80px; height: 26px; gap: 2px; background: #fff; border: 1px solid #d0d0d0; }
.pick svg { width: 11px; height: 16px; }
.dialog hr { margin: 4px 12px 1px 1px; border: 0; height: 3px; background: #c4c4c4; }
.dialog footer { margin-top: 2px; border-top: 1px solid #c4c4c4; height: 34px; display: flex; align-items: center; gap: 9px; padding: 0 10px 0 7px; font-size: 11px; }
.dialog footer svg { width: 12px; height: 12px; margin-right: auto; }
.dialog footer button { width: 57px; height: 19px; border: 1px solid #aaa; background: #eaeaea; color: #555; }
.dialog footer button:disabled { color: #b5b5b5; }
```
